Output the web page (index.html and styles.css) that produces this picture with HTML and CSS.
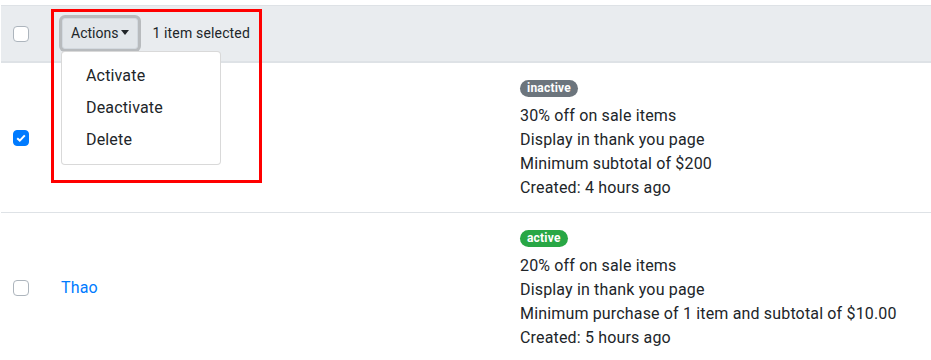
FILE: index.html
```html
<!DOCTYPE html>
<html>
<head>
<title>Upsells</title>
<link rel="stylesheet" href="styles.css">
</head>
<body>
<div class="table-wrap">
    <table class="offers-table">
        <thead>
            <tr>
                <th class="check-col"><span class="checkbox"></span></th>
                <th colspan="2">
                    <div class="bulk-bar">
                        <div class="dropdown">
                            <button class="btn-actions">Actions<span class="caret"></span></button>
                            <div class="dropdown-menu">
                                <a class="dropdown-item" href="#">Activate</a>
                                <a class="dropdown-item" href="#">Deactivate</a>
                                <a class="dropdown-item" href="#">Delete</a>
                            </div>
                        </div>
                        <span class="selected-count">1 item selected</span>
                    </div>
                </th>
            </tr>
        </thead>
        <tbody>
            <tr>
                <td class="check-col"><span class="checkbox checked"><svg width="10" height="8" viewBox="0 0 10 8"><path d="M1.2 4.2 L3.8 6.6 L8.8 1.4" fill="none" stroke="#fff" stroke-width="2"/></svg></span></td>
                <td class="name-col"><a class="offer-link" href="#">Lan</a></td>
                <td class="info-col">
                    <div class="badge-line"><span class="badge badge-inactive">inactive</span></div>
                    <div>30% off on sale items</div>
                    <div>Display in thank you page</div>
                    <div>Minimum subtotal of $200</div>
                    <div>Created: 4 hours ago</div>
                </td>
            </tr>
            <tr>
                <td class="check-col"><span class="checkbox"></span></td>
                <td class="name-col"><a class="offer-link" href="#">Thao</a></td>
                <td class="info-col">
                    <div class="badge-line"><span class="badge badge-active">active</span></div>
                    <div>20% off on sale items</div>
                    <div>Display in thank you page</div>
                    <div>Minimum purchase of 1 item and subtotal of $10.00</div>
                    <div>Created: 5 hours ago</div>
                </td>
            </tr>
        </tbody>
    </table>
    <div class="highlight-box"></div>
</div>
</body>
</html>
```

FILE: styles.css
```css
body {
    margin: 0;
    font-family: "Segoe UI", Roboto, "Liberation Sans", sans-serif;
    font-size: 16px;
    line-height: 1.5;
    letter-spacing: 0.16px;
    color: #212529;
    background: #fff;
}

.table-wrap {
    position: relative;
    padding: 5px 0 0 1px;
}

.offers-table {
    width: 930px;
    border-collapse: collapse;
}

.offers-table th,
.offers-table td {
    padding: 12px;
    vertical-align: middle;
    text-align: left;
}

.offers-table thead th {
    background: #e9ecef;
    border-top: 1px solid #dee2e6;
    border-bottom: 2px solid #dee2e6;
    font-weight: normal;
}

.offers-table tbody td {
    border-bottom: 1px solid #dee2e6;
}

.check-col {
    width: 24px;
}

.name-col {
    width: 435px;
}

.checkbox {
    display: block;
    width: 16px;
    height: 16px;
    box-sizing: border-box;
    border: 1px solid #adb5bd;
    border-radius: 4px;
    background: #fff;
}

.checkbox.checked {
    background: #007bff;
    border-color: #007bff;
    display: flex;
    align-items: center;
    justify-content: center;
}

.bulk-bar {
    display: flex;
    align-items: center;
    height: 31px;
}

.dropdown {
    position: relative;
}

.btn-actions {
    display: block;
    height: 31px;
    font-family: inherit;
    font-size: 14px;
    line-height: 21px;
    letter-spacing: 0;
    padding: 4px 8px;
    margin-left: 1px;
    color: #212529;
    background: #e2e6ea;
    border: 1px solid #d3d9df;
    border-radius: 3px;
    box-shadow: 0 0 0 3px #b8bbbe;
}

.caret {
    display: inline-block;
    margin-left: 3px;
    vertical-align: 3px;
    border-top: 5px solid #212529;
    border-left: 4.5px solid transparent;
    border-right: 4.5px solid transparent;
}

.dropdown-menu {
    position: absolute;
    top: 100%;
    left: 0;
    margin-top: 2px;
    width: 160px;
    box-sizing: border-box;
    padding: 8px 0;
    background: #fff;
    border: 1px solid rgba(0, 0, 0, 0.15);
    border-radius: 4px;
    z-index: 2;
}

.dropdown-item {
    display: block;
    padding: 4px 24px;
    color: #212529;
    text-decoration: none;
    font-size: 16px;
}

.selected-count {
    margin-left: 14px;
    font-size: 14px;
    color: #212529;
}

.offer-link {
    color: #007bff;
    text-decoration: none;
}

.badge-line {
    display: flex;
    padding-top: 5px;
    margin-bottom: 7px;
}

.badge {
    display: block;
    height: 17px;
    box-sizing: border-box;
    font-size: 12px;
    font-weight: 700;
    line-height: 13px;
    letter-spacing: 0.2px;
    padding: 2px 7px;
    border-radius: 10px;
    color: #fff;
}

.badge-inactive {
    background: #6c757d;
}

.badge-active {
    background: #28a745;
}

.highlight-box {
    position: absolute;
    left: 51px;
    top: 9px;
    width: 205px;
    height: 168px;
    border: 3px solid #f00;
    z-index: 3;
}
```
